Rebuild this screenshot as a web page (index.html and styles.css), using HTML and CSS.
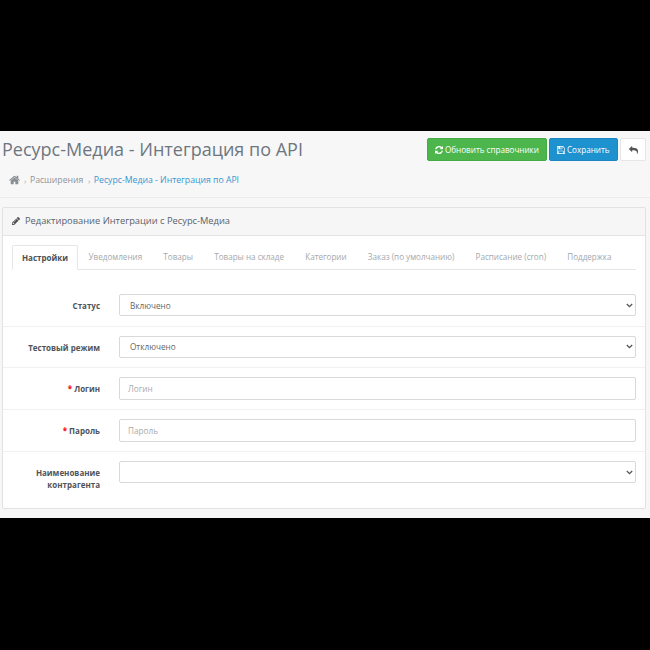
FILE: index.html
```html
<!DOCTYPE html>
<html lang="ru">
<head>
<meta charset="utf-8">
<title>Ресурс-Медиа - Интеграция по API</title>
<link rel="stylesheet" href="styles.css">
</head>
<body>
<main class="page">
  <header class="page-header">
    <div class="title-row">
      <h1>Ресурс-Медиа - Интеграция по API</h1>
      <div class="actions">
        <a class="btn btn-green"><svg class="ico" viewBox="0 0 1536 1536"><path fill="currentColor" d="M1511 928q0 5-1 7-64 268-268 434.500T764 1536q-146 0-282.500-55T238 1324l-129 129q-19 19-45 19t-45-19-19-45V960q0-26 19-45t45-19h448q26 0 45 19t19 45-19 45L420 1142q71 66 161 102t187 36q134 0 250-65t186-179q11-17 53-117 8-23 30-23h192q13 0 22.500 9.500T1511 928zM1536 128v448q0 26-19 45t-45 19h-448q-26 0-45-19t-19-45 19-45l138-138Q969 256 768 256q-134 0-250 65T332 500q-11 17-53 117-8 23-30 23H50q-13 0-22.500-9.500T18 608v-7q65-268 270-434.500T768 0q146 0 284 55.500T1297 212l130-129q19-19 45-19t45 19 19 45z"/></svg>Обновить справочники</a>
        <a class="btn btn-blue"><svg class="ico" viewBox="0 0 1536 1536"><path fill="currentColor" d="M384 1408h768v-384H384v384zM1280 1408h128V512q0-14-10-38.500t-20-34.500l-281-281q-10-10-34-20t-39-10v416q0 40-28 68t-68 28H352q-40 0-68-28t-28-68V128H128v1280h128V992q0-40 28-68t68-28h832q40 0 68 28t28 68v416zM896 480V160q0-13-9.500-22.500T864 128H672q-13 0-22.500 9.500T640 160v320q0 13 9.500 22.500T672 512h192q13 0 22.500-9.500T896 480zM1536 512v928q0 40-28 68t-68 28H96q-40 0-68-28t-28-68V96q0-40 28-68T96 0h928q40 0 88 20t76 48l280 280q28 28 48 76t20 88z"/></svg>Сохранить</a>
        <a class="btn btn-white"><svg class="ico-reply" viewBox="0 0 1792 1536"><path fill="currentColor" d="M1792 1056q0 166-127 451-3 7-10.500 24t-13.500 30-13 22q-12 17-28 17-15 0-23.500-10t-8.500-25q0-9 2.500-26.500t2.500-23.500q5-68 5-123 0-101-17.500-181t-48.500-138.500-80-101-105.500-69.500-133-42.500-154-21.500-175.500-6H640v256q0 26-19 45t-45 19-45-19L19 621Q0 602 0 576t19-45L531 19q19-19 45-19t45 19 19 45v256h224q713 0 875 403 53 134 53 333z"/></svg></a>
      </div>
    </div>
    <nav class="crumbs">
      <svg class="home" viewBox="0 0 1664 1408"><path fill="currentColor" d="M1408 800v480q0 26-19 45t-45 19H960V960H704v384H320q-26 0-45-19t-19-45V800q0-1 .5-3t.5-3l575-474 575 474q1 2 1 6zM1631 731l-62 74q-8 9-21 11h-3q-13 0-21-7L832 233 140 809q-12 8-24 7-13-2-21-11l-62-74q-8-10-7-23.500T37 686L756 87q32-26 76-26t76 26l244 204V96q0-14 9-23t23-9h192q14 0 23 9t9 23v408l219 182q10 8 11 21.500t-7 23.500z"/></svg>
      <span class="sep">›</span><a class="crumb-muted">Расширения</a>
      <span class="sep">›</span><a class="crumb-link">Ресурс-Медиа - Интеграция по API</a>
    </nav>
  </header>

  <section class="panel">
    <div class="panel-heading">
      <svg class="pencil" viewBox="0 0 1515 1515"><path fill="currentColor" d="M363 1387l91-91-235-235-91 91v107h128v128h107zM886 459q0-22-22-22-10 0-17 7L305 986q-7 7-7 17 0 22 22 22 10 0 17-7l542-542q7-7 7-17zM832 267l416 416-832 832H0v-416zM1515 363q0 53-37 90l-166 166-416-416 166-165q36-38 90-38 53 0 91 38l235 234q37 39 37 91z"/></svg>
      <span>Редактирование Интеграции с Ресурс-Медиа</span>
    </div>
    <div class="panel-body">
      <ul class="tabs">
        <li class="tab active">Настройки</li>
        <li class="tab">Уведомления</li>
        <li class="tab">Товары</li>
        <li class="tab">Товары на складе</li>
        <li class="tab">Категории</li>
        <li class="tab">Заказ (по умолчанию)</li>
        <li class="tab">Расписание (cron)</li>
        <li class="tab">Поддержка</li>
      </ul>
      <form class="form">
        <div class="row">
          <label class="label">Статус</label>
          <select class="field select"><option>Включено</option></select>
        </div>
        <div class="row">
          <label class="label">Тестовый режим</label>
          <select class="field select"><option>Отключено</option></select>
        </div>
        <div class="row">
          <label class="label"><span class="req">*</span> Логин</label>
          <input class="field input" placeholder="Логин">
        </div>
        <div class="row">
          <label class="label"><span class="req">*</span> Пароль</label>
          <input class="field input" placeholder="Пароль">
        </div>
        <div class="row row-last">
          <label class="label">Наименование контрагента</label>
          <select class="field select"><option></option></select>
        </div>
      </form>
    </div>
  </section>
</main>
</body>
</html>
```

FILE: styles.css
```css
* { box-sizing: border-box; }
html, body { margin: 0; background: #000; }
body { height: 650px; overflow: hidden; padding-top: 131px; font-family: "Open Sans", sans-serif; }
.page { height: 387px; background: #f7f7f7; padding: 0 4px 0 2px; overflow: hidden; }
.page-header { height: 67px; margin: 0 -4px 0 -2px; padding: 0 4px 0 2px; border-bottom: 1px solid #ececec; }
.title-row { display: flex; justify-content: space-between; align-items: flex-start; padding-top: 7px; }
h1 { margin: 0; font-size: 18px; line-height: 23px; font-weight: 400; color: #6e7680; }
.actions { display: flex; gap: 2px; }
.btn { display: flex; align-items: center; height: 23px; border-radius: 2px; font-size: 8.100px; color: #fff; border: 1px solid; white-space: nowrap; }
.btn-green { width: 120px; padding-left: 7px; background: #4cb64c; border-color: #46aa46; }
.btn-blue { width: 69px; padding-left: 7px; background: #1e91cf; border-color: #1b86c0; }
.btn-white { width: 26px; justify-content: center; background: #fff; border-color: #e6e6e6; color: #555; }
.ico { width: 8px; height: 8px; margin-right: 2px; flex: none; }
.ico-reply { width: 9px; height: 8px; }
.crumbs { display: flex; align-items: center; height: 16px; margin-top: 11px; padding-left: 6.500px; font-size: 8.700px; color: #9aa0a6; }
.home { width: 11px; height: 10px; color: #8a8f94; }
.sep { margin: 0 3.500px 0 4.500px; font-size: 8px; color: #aaa; }
.crumb-link { color: #3a95cf; }
.crumb-muted { color: #8f9499; }
.panel { margin-top: 9px; height: 302px; background: #fff; border: 1px solid #e2e2e2; border-radius: 2px; }
.panel-heading { display: flex; align-items: center; height: 28px; padding: 0 0 2px 9px; background: #f6f6f6; border-bottom: 1px solid #e4e4e4; font-size: 9.300px; color: #59616a; }
.pencil { width: 8px; height: 8px; margin-right: 5px; color: #4d4d4d; }
.panel-body { padding: 9px 9px 0; }
.tabs { display: flex; list-style: none; margin: 0; padding: 0; height: 25px; border-bottom: 1px solid #e6e6e6; }
.tab { padding: 0 10.600px; line-height: 24px; font-size: 8.100px; color: #a4a8ac; white-space: nowrap; }
.tab.active { width: 66px; padding: 0; text-align: center; margin-bottom: -1px; height: 25px; background: #fff; border: 1px solid #e6e6e6; border-bottom-color: #fff; border-radius: 2px 2px 0 0; color: #4a4f55; font-weight: 700; font-size: 8px; }
.form { margin: 0 -9px; padding-top: 14.800px; }
.row { display: flex; align-items: flex-start; height: 41.750px; padding: 9px 9px 0 0; border-bottom: 1px solid #f1f1f1; }
.row-last { border-bottom: 0; }
.label { width: 97px; flex: none; margin-right: 19px; padding-top: 6px; text-align: right; font-size: 8px; line-height: 12px; font-weight: 700; color: #4f545a; }
.req { color: #f00; }
.field { flex: 1; min-width: 0; height: 22.500px; padding: 0 6px 0 10px; border: 1px solid #d9d9d9; border-radius: 2px; background-color: #fff; font-family: "Open Sans", sans-serif; font-size: 8.200px; color: #666; outline: 0; }
.select { appearance: none; background-image: url("data:image/svg+xml,%3Csvg xmlns='http://www.w3.org/2000/svg' width='7' height='5' viewBox='0 0 7 5'%3E%3Cpath d='M.8 1l2.700 2.700L6.200 1' fill='none' stroke='%23555' stroke-width='1.300'/%3E%3C/svg%3E"); background-repeat: no-repeat; background-position: right 2px center; }
.input { padding-left: 8px; }
.input::placeholder { color: #a9a9a9; }
```
